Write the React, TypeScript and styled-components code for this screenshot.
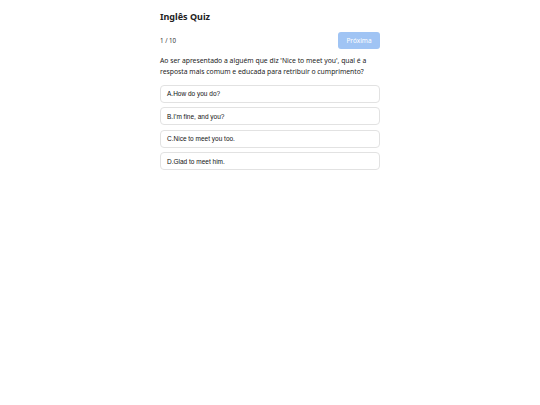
import React, { useState } from 'react'
import styled, { createGlobalStyle } from 'styled-components'

const GlobalStyle = createGlobalStyle`
  html, body {
    margin: 0;
    padding: 0;
    background: #ffffff;
  }
  body {
    font-family: 'Noto Sans', 'Open Sans', sans-serif;
    color: #222;
  }
`

const Page = styled.div`
  width: 220px;
  margin: 0 auto;
  padding-top: 11px;
`

const Title = styled.h1`
  margin: 0;
  font-size: 9px;
  line-height: 12px;
  font-weight: 700;
  color: #222;
`

const Toolbar = styled.div`
  display: flex;
  align-items: center;
  justify-content: space-between;
  margin-top: 9px;
`

const Counter = styled.span`
  font-size: 6.2px;
  color: #333;
`

const NextButton = styled.button`
  width: 42px;
  height: 17px;
  padding: 0;
  border: none;
  border-radius: 3px;
  background: #a0c4f4;
  color: #fff;
  font-family: 'Noto Sans', sans-serif;
  font-size: 6.5px;
  cursor: ${({ disabled }) => (disabled ? 'default' : 'pointer')};
`

const Question = styled.p`
  margin: 6px 0 0;
  font-size: 6.8px;
  line-height: 11px;
  color: #222;
`

const Options = styled.div`
  display: flex;
  flex-direction: column;
  gap: 4.5px;
  margin-top: 7.5px;
`

const Option = styled.button<{ selected: boolean }>`
  display: flex;
  align-items: center;
  height: 18px;
  padding: 0 6px;
  border: 1px solid ${({ selected }) => (selected ? '#8fb8f0' : '#e2e2e2')};
  border-radius: 4px;
  background: ${({ selected }) => (selected ? '#eef5ff' : '#fff')};
  font-family: 'Liberation Sans', Arial, sans-serif;
  font-size: 6.5px;
  color: #111;
  text-align: left;
  cursor: pointer;
`

const options = ['A.How do you do?', 'B.I\u2019m fine, and you?', 'C.Nice to meet you too.', 'D.Glad to meet him.']

const App = () => {
  const [selected, setSelected] = useState<number | null>(null)

  return (
    <>
      <GlobalStyle />
      <Page>
        <Title>Inglês Quiz</Title>
        <Toolbar>
          <Counter>1 / 10</Counter>
          <NextButton disabled={selected === null}>Próxima</NextButton>
        </Toolbar>
        <Question>
          Ao ser apresentado a alguém que diz 'Nice to meet you', qual é a resposta mais comum e educada para
          retribuir o cumprimento?
        </Question>
        <Options>
          {options.map((text, i) => (
            <Option key={text} selected={selected === i} onClick={() => setSelected(i)}>
              {text}
            </Option>
          ))}
        </Options>
      </Page>
    </>
  )
}

export default App
